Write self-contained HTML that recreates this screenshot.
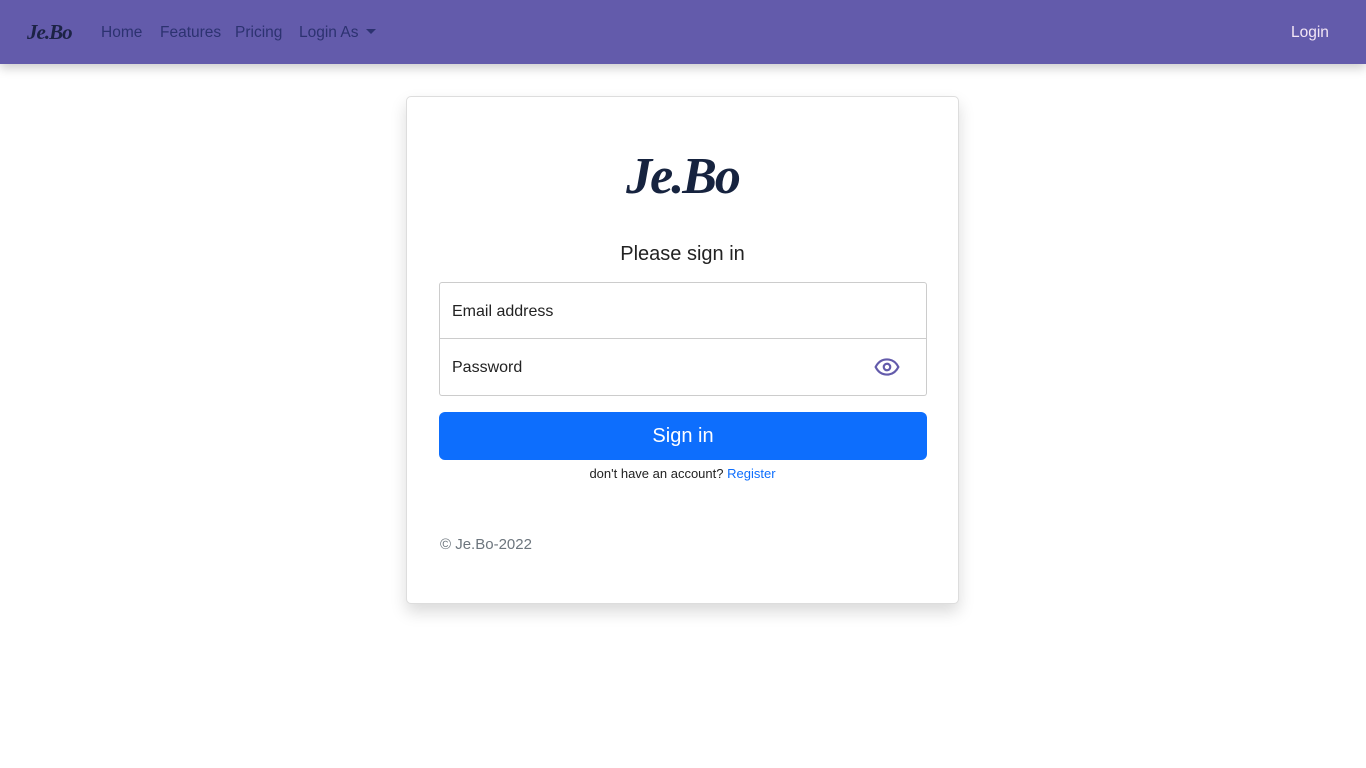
<!DOCTYPE html>
<html><head><meta charset="utf-8"><style>
body{margin:0;width:1366px;height:768px;background:#fff;font-family:"Liberation Sans",sans-serif;position:relative;overflow:hidden}
.nav{position:absolute;left:0;top:0;width:1366px;height:64px;background:#635bab;box-shadow:0 4px 10px rgba(0,0,0,.2)}
.nav .brand{position:absolute;left:27px;top:20px;font-family:"Liberation Serif",serif;font-style:italic;font-weight:bold;font-size:21px;color:#1c2345;letter-spacing:-1px}
.nav a{position:absolute;top:24px;font-size:15.5px;color:#2c3270;text-decoration:none}
.caret{display:inline-block;border-left:5px solid transparent;border-right:5px solid transparent;border-top:5px solid #2c3270;margin-left:8px;vertical-align:3px}
.card{position:absolute;left:406px;top:96px;width:551px;height:506px;border:1px solid #ddd;border-radius:5px;box-shadow:0 8px 16px rgba(0,0,0,.15);background:#fff}
.logo{position:absolute;left:0;width:551px;top:50px;text-align:center;font-family:"Liberation Serif",serif;font-style:italic;font-weight:bold;font-size:52px;color:#16233f;letter-spacing:-2px}
.title{position:absolute;top:146px;width:551px;text-align:center;font-size:20px;color:#222}
.inp{position:absolute;left:32px;width:488px;height:57px;border:1px solid #ccc;font-size:16px;color:#222;box-sizing:border-box;padding:20px 12px}
.btn{position:absolute;left:32px;top:315px;width:488px;height:48px;background:#0d6efd;border-radius:6px;color:#fff;font-size:20px;text-align:center;line-height:48px}
.reg{position:absolute;top:369px;width:551px;text-align:center;font-size:13px;color:#222}
.reg span{color:#0d6efd}
.foot{position:absolute;left:33px;top:439px;font-size:15px;color:#6c757d}
</style></head><body>
<div class="nav"><div class="brand">Je.Bo</div>
<a style="left:101px">Home</a><a style="left:160px">Features</a><a style="left:235px">Pricing</a><a style="left:299px">Login As<span class="caret"></span></a>
<a style="left:1291px;color:#f3e6f5">Login</a></div>
<div class="card">
<div class="logo">Je.Bo</div>
<div class="title">Please sign in</div>
<div class="inp" style="top:185px;border-radius:3px 3px 0 0">Email address</div>
<div class="inp" style="top:242px;border-top:none;border-radius:0 0 3px 3px">Password
<svg style="position:absolute;left:434px;top:18px" width="26" height="20" viewBox="0 0 24 18"><path d="M1.5 9C4 4 8 2 12 2s8 2 10.5 7C20 14 16 16 12 16S4 14 1.5 9z" fill="none" stroke="#635bab" stroke-width="2"/><circle cx="12" cy="9" r="3" fill="none" stroke="#635bab" stroke-width="2"/></svg></div>
<div class="btn">Sign in</div>
<div class="reg">don't have an account? <span>Register</span></div>
<div class="foot">© Je.Bo-2022</div>
</div>
</body></html>
